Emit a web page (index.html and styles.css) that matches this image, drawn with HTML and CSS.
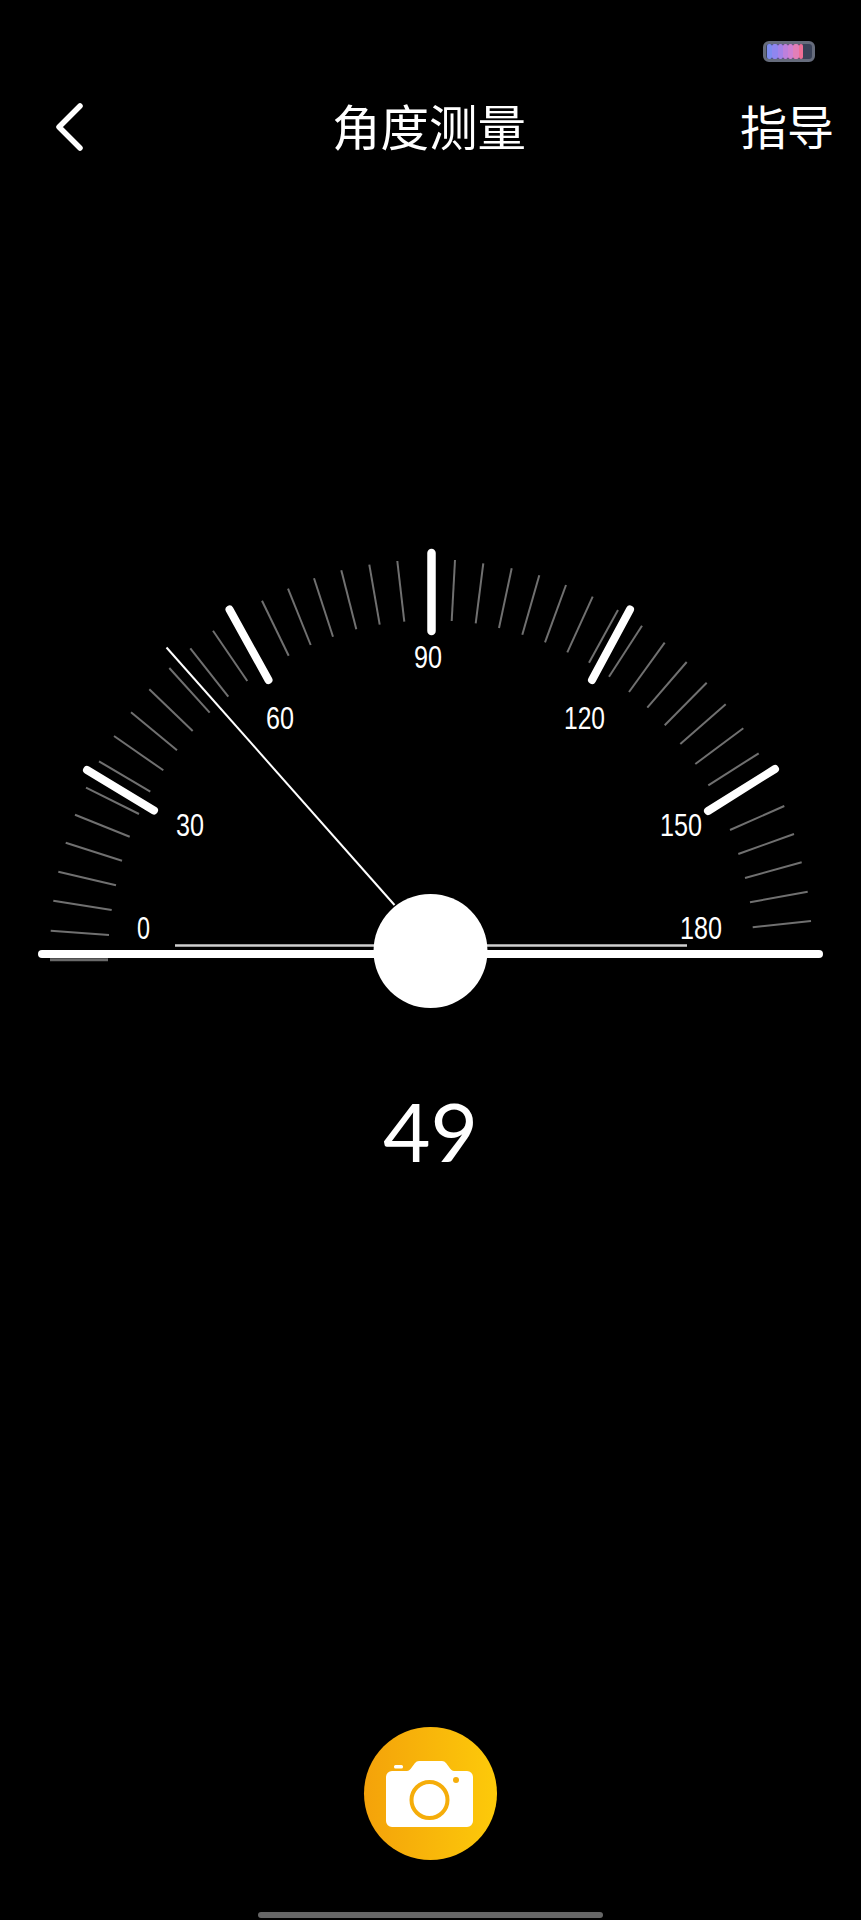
FILE: index.html
```html
<!DOCTYPE html>
<html lang="zh">
<head>
<meta charset="utf-8">
<title>角度测量</title>
<link rel="stylesheet" href="styles.css">
</head>
<body>
<main class="page">
  <div class="status">
    <div class="battery">
      <i class="cell c1"></i><i class="cell c2"></i><i class="cell c3"></i><i class="cell c4"></i><i class="cell c5"></i><i class="cell c6"></i><i class="cell c7"></i>
    </div>
  </div>
  <header class="nav">
    <svg class="back" width="30" height="50" viewBox="0 0 30 50"><path d="M26 3 Q14 15 5 24 Q14 33 26 45" /></svg>
    <h1 class="title">角度测量</h1>
    <span class="guide">指导</span>
  </header>
  <svg class="dial" width="861" height="480" viewBox="0 540 861 480">
    <g class="minor">
      <line class="under" x1="50" y1="959.800" x2="108" y2="959.800"/>
      <line x1="50.700" y1="930.700" x2="109" y2="935"/>
      <line x1="53.300" y1="900.700" x2="111.700" y2="910"/>
      <line x1="58.300" y1="871.700" x2="116" y2="885.300"/>
      <line x1="65.700" y1="842.700" x2="122" y2="860.700"/>
      <line x1="75" y1="814.700" x2="129.700" y2="836.700"/>
      <line x1="86" y1="787.700" x2="139" y2="814"/>
      <line x1="99" y1="761.300" x2="150.300" y2="791.700"/>
      <line x1="114" y1="736" x2="163.300" y2="770.300"/>
      <line x1="131" y1="712.300" x2="177" y2="750.300"/>
      <line x1="149.300" y1="689.300" x2="192.700" y2="731"/>
      <line x1="169.300" y1="668" x2="209.700" y2="712.700"/>
      <line x1="190.300" y1="648.300" x2="228.300" y2="696.700"/>
      <line x1="213" y1="630.700" x2="247.300" y2="681"/>
      <line x1="262" y1="600.700" x2="288.700" y2="655.700"/>
      <line x1="288" y1="588.700" x2="310.700" y2="645"/>
      <line x1="314" y1="578.300" x2="333" y2="636.700"/>
      <line x1="341.300" y1="570.300" x2="356.300" y2="629.300"/>
      <line x1="369.300" y1="564.700" x2="379.700" y2="624.700"/>
      <line x1="397.300" y1="561" x2="404.300" y2="621.700"/>
      <line x1="455" y1="560" x2="451.700" y2="621"/>
      <line x1="483.300" y1="563.300" x2="475.700" y2="623.300"/>
      <line x1="511.700" y1="568.300" x2="499" y2="628"/>
      <line x1="539.300" y1="575.300" x2="522.300" y2="634.700"/>
      <line x1="566" y1="585" x2="545" y2="642.300"/>
      <line x1="592.700" y1="596.700" x2="567.300" y2="652.300"/>
      <line x1="618" y1="610" x2="589" y2="662.700"/>
      <line x1="642" y1="625.700" x2="609" y2="676.700"/>
      <line x1="664.700" y1="642.700" x2="629" y2="692"/>
      <line x1="686.700" y1="662" x2="647.300" y2="707.700"/>
      <line x1="706.700" y1="682.700" x2="664.700" y2="725.300"/>
      <line x1="725.700" y1="704.300" x2="680.300" y2="744"/>
      <line x1="743.300" y1="728.300" x2="695.300" y2="764"/>
      <line x1="758.700" y1="753.300" x2="708.300" y2="785.300"/>
      <line x1="784.300" y1="806" x2="730" y2="830"/>
      <line x1="794" y1="834" x2="738.300" y2="854"/>
      <line x1="801.700" y1="862.300" x2="745" y2="878"/>
      <line x1="807.700" y1="891.700" x2="750" y2="902.300"/>
      <line x1="811" y1="921" x2="752.700" y2="927.300"/>
    </g>
    <g class="major">
      <line x1="87" y1="770" x2="154" y2="810.500"/>
      <line x1="229.500" y1="609.500" x2="268.500" y2="680"/>
      <line class="top" x1="431.500" y1="553" x2="431.500" y2="631"/>
      <line x1="630" y1="609.500" x2="592" y2="680"/>
      <line x1="775" y1="769" x2="708" y2="811"/>
    </g>
    <g class="labels">
      <text x="137" y="939" textLength="13" lengthAdjust="spacingAndGlyphs">0</text>
      <text x="176" y="836" textLength="28" lengthAdjust="spacingAndGlyphs">30</text>
      <text x="266" y="729" textLength="28" lengthAdjust="spacingAndGlyphs">60</text>
      <text x="414" y="668" textLength="28" lengthAdjust="spacingAndGlyphs">90</text>
      <text x="564" y="729" textLength="41" lengthAdjust="spacingAndGlyphs">120</text>
      <text x="660" y="836" textLength="42" lengthAdjust="spacingAndGlyphs">150</text>
      <text x="680" y="939" textLength="42" lengthAdjust="spacingAndGlyphs">180</text>
    </g>
    <line class="base-thin" x1="175" y1="945.500" x2="687" y2="945.500"/>
    <line class="base-bar" x1="42" y1="954" x2="819" y2="954"/>
    <line class="needle" x1="166.500" y1="647.500" x2="394.500" y2="905"/>
    <circle class="hub" cx="430.500" cy="951" r="57"/>
  </svg>
  <div class="value">49</div>
  <button class="shutter" type="button" aria-label="拍照">
    <svg width="133" height="133" viewBox="0 0 133 133">
      <path class="cam-body" d="M22 50 a6 6 0 0 1 6 -6 h15 q2 0 3.500 -2 l4.500 -6 q1.500 -2 4 -2 h23 q2.500 0 4 2 l4.500 6 q1.500 2 3.500 2 h13 a6 6 0 0 1 6 6 v44 a6 6 0 0 1 -6 6 h-75 a6 6 0 0 1 -6 -6 z"/>
      <rect class="cam-body" x="30" y="38" width="9" height="3.500" rx="1.500"/>
      <circle class="cam-lens" cx="65.500" cy="73" r="18"/>
      <circle class="cam-dot" cx="92" cy="53" r="3"/>
    </svg>
  </button>
  <div class="home-bar"></div>
</main>
</body>
</html>
```
FILE: styles.css
```css
* { box-sizing: border-box; }
html, body { margin: 0; background: #000; }
.page {
  width: 861px;
  height: 1920px;
  background: #000;
  color: #fff;
  display: flex;
  flex-direction: column;
  font-family: "Noto Sans CJK SC", "Noto Sans", sans-serif;
  overflow: hidden;
}
.status {
  height: 62px;
  padding-left: 763px;
  padding-top: 41px;
  flex: none;
}
.battery {
  width: 52px;
  height: 21px;
  border: 3px solid #666c7c;
  border-radius: 6px;
  background: #3a4258;
  display: flex;
  padding: 0 0 0 1px;
  filter: blur(0.6px);
}
.cell { width: 5.300px; flex: none; border-radius: 2px; display: block; }
.c1 { background: #7d8cf0; }
.c2 { background: #8f86ef; }
.c3 { background: #a482e8; }
.c4 { background: #bd80dc; }
.c5 { background: #cf80d2; }
.c6 { background: #e27fb8; }
.c7 { background: #ef6f96; width: 4px; }
.nav {
  height: 50px;
  margin-top: 41px;
  padding-left: 54px;
  display: flex;
  align-items: center;
  flex: none;
}
.back { flex: none; }
.back path { fill: none; stroke: #fff; stroke-width: 5.500; stroke-linecap: round; stroke-linejoin: round; }
.title {
  margin: 0 0 6px 248px;
  width: 194px;
  font-size: 48.500px;
  font-weight: 400;
  line-height: 50px;
  white-space: nowrap;
}
.guide {
  margin: 0 0 6px 214px;
  font-size: 47px;
  line-height: 50px;
  white-space: nowrap;
}
.dial {
  display: block;
  margin-top: 387px;
  flex: none;
}
.minor line { stroke: #707070; stroke-width: 2; }
.minor .under { stroke: #6a6a6a; stroke-width: 3; }
.major line { stroke: #fff; stroke-width: 8; stroke-linecap: round; }
.major .top { stroke-width: 8.500; }
.labels text {
  fill: #fff;
  font-family: "Liberation Sans", sans-serif;
  font-size: 31px;
}
.base-thin { stroke: #d0d0d0; stroke-width: 2.500; }
.base-bar { stroke: #fff; stroke-width: 8; stroke-linecap: round; }
.needle { stroke: #fff; stroke-width: 2; }
.hub { fill: #fff; }
.value {
  margin-top: 62px;
  height: 96px;
  text-align: center;
  font-family: Lato, sans-serif;
  font-size: 82px;
  line-height: 96px;
}
.shutter {
  display: block;
  width: 133px;
  height: 133px;
  margin: 549px 0 0 363.500px;
  padding: 0;
  border: 0;
  border-radius: 50%;
  background: linear-gradient(90deg, #f4a20a, #fdca0a);
  flex: none;
}
.shutter svg { display: block; }
.cam-body { fill: #fff; }
.cam-lens { fill: none; stroke: #f5ad0a; stroke-width: 4; }
.cam-dot { fill: #f5ad0a; }
.home-bar {
  width: 345px;
  height: 6px;
  margin: 52px 0 0 258px;
  background: #666;
  border-radius: 3px;
  flex: none;
}
```
